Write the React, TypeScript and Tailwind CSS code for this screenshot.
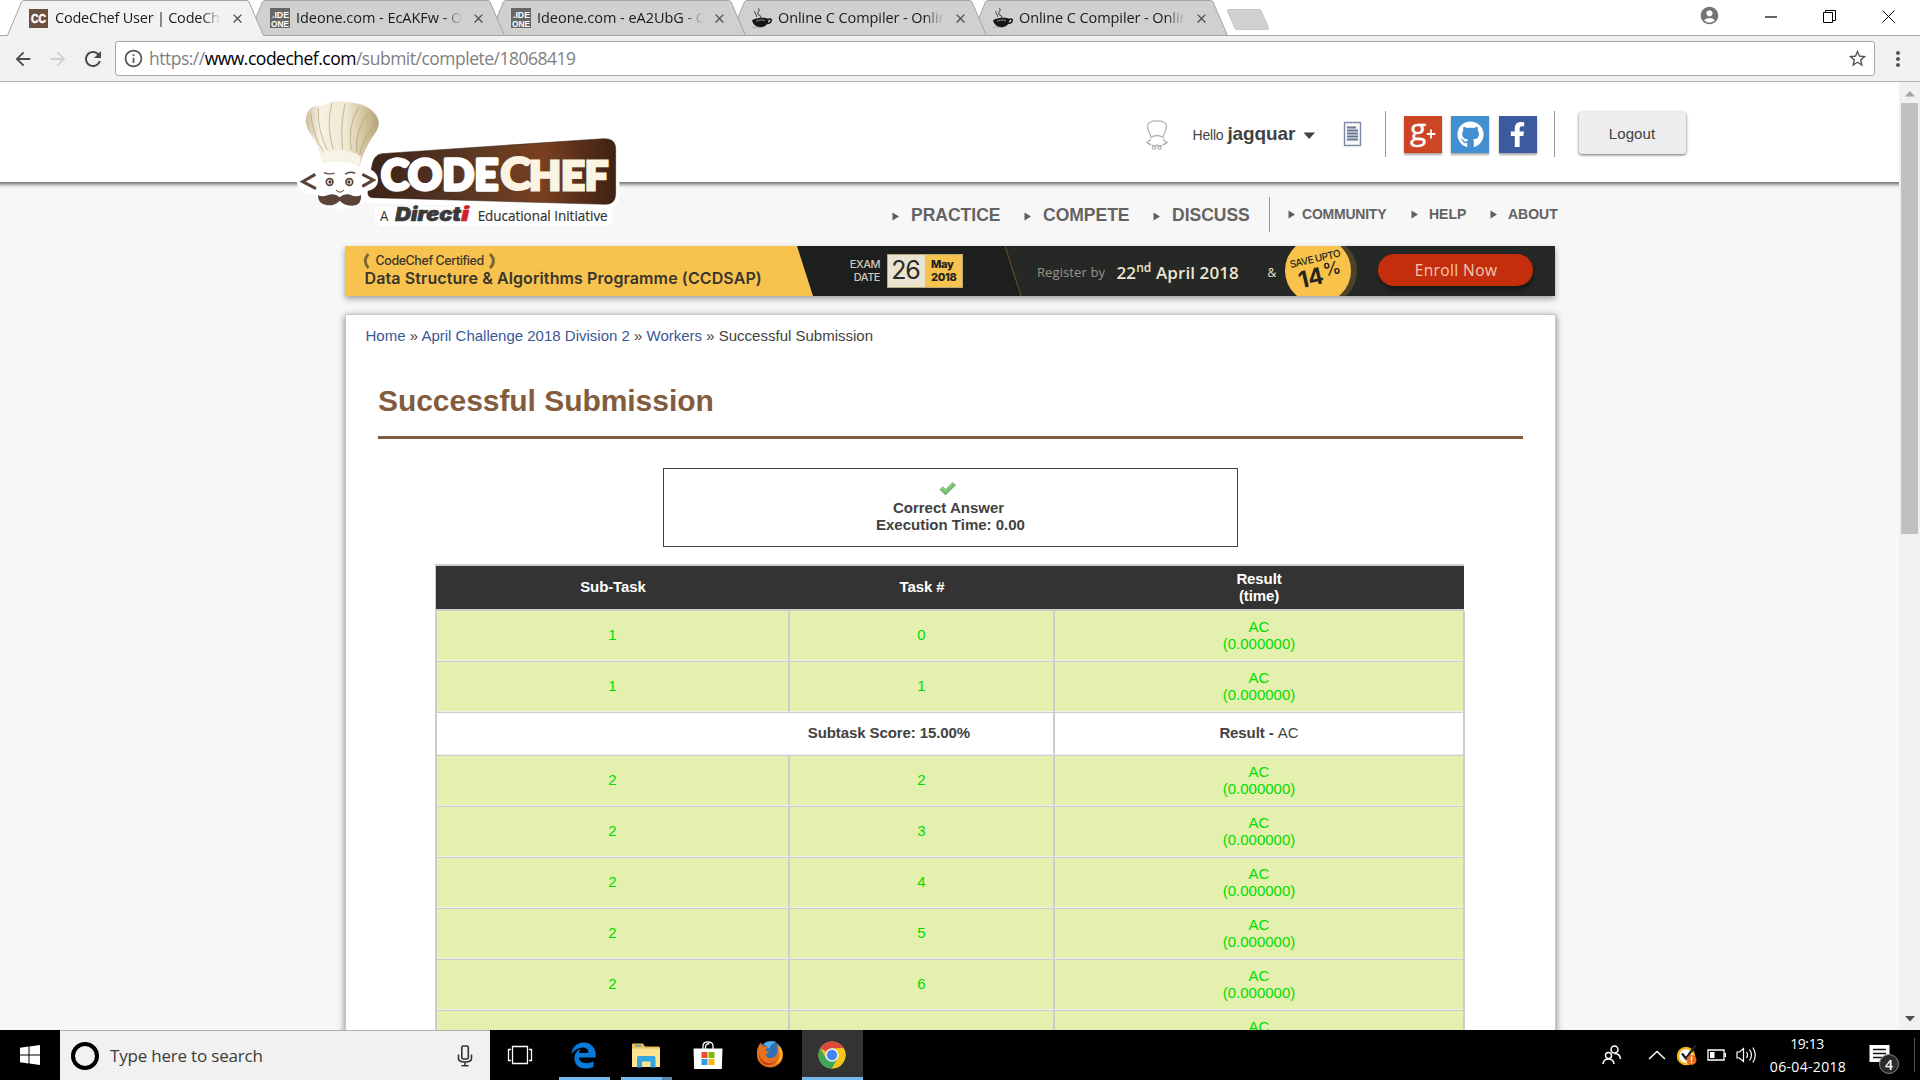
import React from "react";
import { FaEdgeLegacy, FaFacebookF, FaGithub } from "react-icons/fa";
import {
  MdAccountCircle,
  MdArrowBack,
  MdArrowForward,
  MdClose,
  MdInfoOutline,
  MdMoreVert,
  MdRefresh,
  MdStarBorder,
} from "react-icons/md";

function CodeChefFavicon() {
  return (
    <svg width="19" height="19" viewBox="0 0 19 19">
      <rect width="19" height="19" fill="#6b4f3f" />
      <text x="9.500" y="13.600" textAnchor="middle" fontFamily="Liberation Sans" fontWeight="700" fontSize="12" fill="#fff" stroke="#fff" strokeWidth="0.500" textLength="15" lengthAdjust="spacingAndGlyphs">CC</text>
    </svg>
  );
}

function IdeoneFavicon() {
  return (
    <svg width="20" height="20" viewBox="0 0 20 20">
      <rect width="20" height="20" fill="#666" />
      <text x="2" y="9.500" fontFamily="Liberation Sans" fontWeight="700" fontSize="9" fill="#fff" textLength="17" lengthAdjust="spacingAndGlyphs">.IDE</text>
      <text x="1" y="18.500" fontFamily="Liberation Sans" fontWeight="700" fontSize="9" fill="#fff" textLength="18" lengthAdjust="spacingAndGlyphs">ONE</text>
    </svg>
  );
}

function CupFavicon() {
  return (
    <svg width="20" height="20" viewBox="0 0 20 20" fill="none">
      <path d="M6 0.500c4 2-3 4 1 6.500s1 3 0 4M3 3c-2 2 3 3 1.500 6" stroke="#555" strokeWidth="1.100" />
      <path d="M0 12.500c3-3 13-3.500 16.500-1.500 0 4-2 7-6 8-6 1-9-2-10.500-6.500z" fill="#161616" />
      <path d="M16 11.500c5-2 4 4-1.500 4" stroke="#161616" strokeWidth="1.500" />
      <path d="M4 13.200c3-1.500 6-1.500 9-.8" stroke="#999" strokeWidth="1" />
      <path d="M0 19.300h8" stroke="#aaa" strokeWidth="1" />
    </svg>
  );
}

const tabs = [
  { title: "CodeChef User | CodeChe", icon: <CodeChefFavicon />, active: true, z: "z-50", spacing: "tracking-[-0.22px]" },
  { title: "Ideone.com - EcAKFw - O", icon: <IdeoneFavicon />, active: false, z: "z-40", spacing: "tracking-[-0.04px]" },
  { title: "Ideone.com - eA2UbG - O", icon: <IdeoneFavicon />, active: false, z: "z-30", spacing: "tracking-[-0.04px]" },
  { title: "Online C Compiler - Onlin", icon: <CupFavicon />, active: false, z: "z-20", spacing: "tracking-[-0.08px]" },
  { title: "Online C Compiler - Onlin", icon: <CupFavicon />, active: false, z: "z-10", spacing: "tracking-[-0.08px]" },
];

function Tab({ title, icon, active, z, spacing }: (typeof tabs)[number]) {
  return (
    <div className={`relative h-9 w-[241px] shrink-0 ${z}`}>
      <svg className="absolute top-0 left-0" width="258" height="36" viewBox="0 0 258 36">
        <path d="M0 36L0.500 35.500L14.500 2Q15.200 0.500 17 0.500H239.500Q241.300 0.500 242 2L256.500 35.500L257 36z" fill={active ? "#f2f2f2" : "#d0d0d0"} />
        <path
          d={active ? "M0.500 35.500L14.500 2Q15.200 0.500 17 0.500H239.500Q241.300 0.500 242 2L256.500 35.500" : "M0.500 35.500L14.500 2Q15.200 0.500 17 0.500H239.500Q241.300 0.500 242 2L256.500 35.500H0"}
          fill="none"
          stroke="#a3a3a3"
        />
      </svg>
      <div className="relative flex h-full items-center pl-[22px]">
        <div className="flex w-[26px]">{icon}</div>
        <div className={`w-[170px] text-[14.5px] whitespace-nowrap text-[#1a1a1a] [mask-image:linear-gradient(to_right,black_86%,transparent_98%)] ${spacing}`}>
          {title}
        </div>
        <MdClose className="ml-[4.5px] size-[15px] text-[#4f4f4f]" />
      </div>
    </div>
  );
}

function BrowserChrome() {
  return (
    <div className="shrink-0 font-['Open_Sans',sans-serif]">
      <div className="flex h-9 items-start bg-white pl-[7px] shadow-[inset_0_-1px_0_#a9a9a9]">
        {tabs.map((t, i) => (
          <Tab key={i} {...t} />
        ))}
        <svg className="mt-[9px] ml-[14px]" width="46" height="21" viewBox="0 0 46 21">
          <path d="M3 0.500H33Q34.500 0.500 35.200 2L42.500 18.500Q43 20.500 41 20.500H11.500Q9.500 20.500 8.800 19L1.500 2Q1 0.500 3 0.500z" fill="#d0d0d0" stroke="#c4c4c4" />
        </svg>
        <div className="ml-auto flex h-[33px] items-center pr-[25px] text-black">
          <MdAccountCircle className="mr-[45px] size-[21px] -translate-y-px text-[#757575]" />
          <svg className="mr-[46px]" width="12" height="12"><path d="M0 6H12" stroke="black" strokeWidth="1.200" /></svg>
          <svg className="mr-[46px]" width="13" height="13" fill="none" stroke="black"><path d="M0.500 2.500h9v10h-9zM2.500 2.500v-2h10v10h-3" /></svg>
          <svg width="13" height="13" fill="none" stroke="black"><path d="M0.500 0.500L12.500 12.500M12.500 0.500L0.500 12.500" /></svg>
        </div>
      </div>
      <div className="flex h-[46px] items-center border-b border-[#b3b3b3] bg-[#f1f1f1]">
        <MdArrowBack className="ml-[12px] size-[22px] text-[#4a4a4a]" />
        <MdArrowForward className="ml-[13px] size-[22px] text-[#cfcfcf]" />
        <MdRefresh className="ml-[12px] size-[24px] text-[#4a4a4a]" />
        <div className="ml-[10px] flex h-[35px] w-[1760px] items-center rounded-[3px] border border-[#a9a9a9] bg-white pr-[6px] pl-[7px]">
          <MdInfoOutline className="size-[21px] text-[#555]" />
          <div className="ml-[5px] text-[17.5px] leading-none tracking-[-0.5px] whitespace-nowrap text-[#7f7f7f]">
            https://<span className="text-black">www.codechef.com</span>/submit/complete/18068419
          </div>
          <MdStarBorder className="ml-auto size-[21px] text-[#555]" />
        </div>
        <MdMoreVert className="ml-[11px] size-[24px] text-[#555]" />
      </div>
    </div>
  );
}

function Logo() {
  return (
    <svg className="absolute top-0 left-[290px]" width="350" height="158" viewBox="0 6 1050 474">
      <defs>
        <linearGradient id="board" x1="0" x2="1">
          <stop offset="0" stopColor="#3d2318" />
          <stop offset="0.250" stopColor="#4d2e20" />
          <stop offset="0.450" stopColor="#5d3a24" />
          <stop offset="0.700" stopColor="#7a401f" />
          <stop offset="0.850" stopColor="#5a301b" />
          <stop offset="1" stopColor="#3e2214" />
        </linearGradient>
        <linearGradient id="hat" x1="0" x2="1">
          <stop offset="0" stopColor="#cdbf9a" />
          <stop offset="0.200" stopColor="#f6f2e4" />
          <stop offset="0.550" stopColor="#efe8d2" />
          <stop offset="0.750" stopColor="#d8cba8" />
          <stop offset="1" stopColor="#b5a47a" />
        </linearGradient>
      </defs>
      <path d="M70 250L20 300Q20 340 75 345Q90 390 150 386Q190 390 225 365L240 370L955 386Q987 380 988 340V210Q985 170 950 165L270 210Q230 220 225 245z" fill="#fff" />
      <path d="M255 380H965V425Q960 438 940 438H280Q255 436 255 415z" fill="#fff" />
      <path d="M275 221L940 176Q977 174 977 206V342Q976 374 945 373L248 353Q232 352 234 336L245 262Q250 224 275 221z" fill="url(#board)" stroke="#2e1a10" strokeWidth="1.500" />
      <path d="M95 245Q85 190 60 160Q38 125 52 98Q60 75 100 76Q130 58 170 66Q240 70 262 112Q274 135 255 160Q225 200 207 262Q150 235 95 250z" fill="url(#hat)" />
      <path d="M62 98Q68 165 100 215M85 84Q82 150 112 210M125 70Q108 140 130 208M165 72Q150 140 158 208M205 82Q172 140 184 210M235 98Q195 150 200 215M258 128Q215 180 208 230" fill="none" stroke="#a8926b" strokeWidth="3" opacity="0.600" />
      <path d="M92 225Q150 195 213 228L207 264Q150 232 98 252z" fill="#f7f3e6" />
      <ellipse cx="150" cy="305" rx="85" ry="60" fill="#fff" />
      <circle cx="232" cy="300" r="32" fill="#fff" />
      <path d="M76 283L38 305L78 326M217 283L250 300L217 319" fill="none" stroke="#5b4337" strokeWidth="9" />
      <path d="M102 278Q118 285 134 279M165 283Q180 272 196 280" fill="none" stroke="#5b4337" strokeWidth="4" />
      <circle cx="119" cy="306" r="10" fill="#fff" stroke="#5b4337" strokeWidth="5" />
      <circle cx="178" cy="306" r="10" fill="#fff" stroke="#5b4337" strokeWidth="5" />
      <circle cx="120" cy="306" r="5" fill="#5b4337" />
      <circle cx="177" cy="306" r="5" fill="#5b4337" />
      <path d="M138 330Q150 343 162 330" fill="none" stroke="#5b4337" strokeWidth="3" />
      <path d="M149 352Q165 337 188 347Q205 352 213 344Q217 374 188 377Q162 377 149 362Q136 377 112 376Q82 372 84 345Q96 352 112 346Q134 338 149 352z" fill="#5b4337" />
      <g fontFamily="Lato" fontWeight="900">
        <text x="273" y="331" fontSize="126" fill="#fff" stroke="#fff" strokeWidth="10" strokeLinejoin="round" textLength="352" lengthAdjust="spacingAndGlyphs">CODE</text>
        <text x="630" y="331" fontSize="138" fill="#faf4e0" stroke="#faf4e0" strokeWidth="6" textLength="94" lengthAdjust="spacingAndGlyphs">C</text>
        <text x="717" y="331" fontSize="120" fill="#faf4e0" stroke="#faf4e0" strokeWidth="9" textLength="238" lengthAdjust="spacingAndGlyphs">HEF</text>
      </g>
      <text x="270" y="424" fontFamily="Open Sans" fontSize="43" fill="#333" textLength="25" lengthAdjust="spacingAndGlyphs">A</text>
      <text x="316" y="424" fontFamily="Inter" fontWeight="900" fontStyle="italic" fontSize="57" fill="#3a3a3a" stroke="#3a3a3a" strokeWidth="2" textLength="197" lengthAdjust="spacingAndGlyphs">Direct</text>
      <text x="514" y="424" fontFamily="Inter" fontWeight="900" fontStyle="italic" fontSize="57" fill="#cf2127" stroke="#cf2127" strokeWidth="2" textLength="23" lengthAdjust="spacingAndGlyphs">i</text>
      <text x="563" y="424" fontFamily="Open Sans" fontSize="42" fill="#333" stroke="#333" strokeWidth="0.600" textLength="390" lengthAdjust="spacingAndGlyphs">Educational Initiative</text>
    </svg>
  );
}

function Header() {
  return (
    <header className="relative z-10 flex h-[100px] bg-white shadow-[0_1px_0_#858585,0_2px_0_#979797,0_3px_0_#b5b5b5,0_4px_0_#d0d0d0,0_5px_0_#e6e6e6,0_6px_0_#f0f0f0]">
      <Logo />
      <div className="ml-[1146px] flex h-[72px] items-center pt-[32px] pb-px whitespace-nowrap">
        <svg className="mt-[2px]" width="22" height="30" viewBox="0 0 22 30" fill="none" stroke="#b5b5b5" strokeWidth="1.300">
          <path d="M5 17.500C4.500 13 1.200 10 1.500 6C2 1.500 8 .8 11 .8S20 1.500 20.500 6C20.800 10 17.500 13 17 17.500Q11 13.500 5 17.500z" />
          <path d="M5 19.500L1 22.500L5 25M17 19.500L21 22.500L17 25M6 25Q8.500 27 11 25Q13.500 27 16 25" strokeWidth="1.500" />
          <circle cx="8" cy="27.500" r="1.700" /><circle cx="13.500" cy="27.500" r="1.700" />
        </svg>
        <div className="mt-[2px] ml-[24.5px] flex w-[103px] items-baseline text-[#424242]">
          <span className="text-[14px] tracking-[-0.2px]">Hello</span>
          <span className="ml-[4px] text-[19px] font-bold tracking-[-0.1px]">jagquar</span>
        </div>
        <svg className="mt-[5px] ml-[7px]" width="13" height="8"><path d="M0.500 0.500H12L6.200 7z" fill="#424242" /></svg>
        <svg className="ml-[27px]" width="19" height="26" fill="none">
          <path d="M1.500 1.500h16v23h-16z" stroke="#7d8ba4" strokeWidth="1.400" fill="#f6f8fb" />
          <path d="M4 6.500h9M4 9.500h11M4 12.500h11M4 15.500h11M4 18.500h11" stroke="#67758f" strokeWidth="1.800" />
        </svg>
      </div>
      <div className="mt-[29px] ml-[23px] flex">
        <div className="h-[46px] w-px bg-[#999]" />
        <div className="mt-[5px] ml-[18px] flex gap-[9.5px] text-white">
          <div className="flex h-[37px] w-[38px] items-center justify-center bg-[#cd4524] shadow-[0_2px_2px_rgba(0,0,0,0.35)]">
            <svg width="32" height="32">
              <text x="3" y="20.500" fontFamily="Open Sans" fontSize="30" fill="#fff" stroke="#fff" strokeWidth="0.300">g</text>
              <path d="M24 10.500v9M19.800 15h8.600" stroke="#fff" strokeWidth="1.800" />
            </svg>
          </div>
          <div className="flex h-[37px] w-[38px] items-center justify-center bg-[#4290d1] shadow-[0_2px_2px_rgba(0,0,0,0.35)]">
            <FaGithub className="size-[27px]" />
          </div>
          <div className="flex h-[37px] w-[38px] items-center justify-center bg-[#3c5a9e] shadow-[0_2px_2px_rgba(0,0,0,0.35)]">
            <FaFacebookF className="size-[25px]" />
          </div>
        </div>
        <div className="ml-[17px] h-[46px] w-px bg-[#999]" />
        <button className="mt-px ml-[24px] h-[42px] w-[107px] rounded-[3px] bg-[#ededed] pt-[3px] text-[15px] tracking-[0.1px] text-[#424242] shadow-[0_1px_3px_rgba(0,0,0,0.6)]">
          Logout
        </button>
      </div>
    </header>
  );
}

function Arrow() {
  return (
    <svg width="8" height="9" className="shrink-0"><path d="M0.500 0.500L7 4.500L0.500 8.500z" fill="#5e5e5e" /></svg>
  );
}

function MainNav() {
  const main = [
    ["PRACTICE", "w-[132px]"],
    ["COMPETE", "w-[129px]"],
    ["DISCUSS", "w-[116px]"],
  ];
  const side = [
    ["COMMUNITY", "w-[123px]", "ml-[6px] tracking-[-0.23px]"],
    ["HELP", "w-[79px]", "ml-[10px]"],
    ["ABOUT", "w-[66px]", "ml-[10px]"],
  ];
  return (
    <nav className="flex h-[64px] items-start pt-[15px] pl-[892px] font-bold text-[#636363]">
      {main.map(([label, w]) => (
        <div key={label} className={`flex h-[36px] items-center ${w}`}>
          <div className="pt-[2px]"><Arrow /></div>
          <span className="ml-[11px] text-[17.5px]">{label}</span>
        </div>
      ))}
      <div className="h-[35px] w-px bg-[#999]" />
      <div className="ml-[18px] flex">
        {side.map(([label, w, ml]) => (
          <div key={label} className={`flex h-[35px] items-center ${w}`}>
            <Arrow />
            <span className={`text-[14px] ${ml}`}>{label}</span>
          </div>
        ))}
      </div>
    </nav>
  );
}

function Banner() {
  return (
    <div className="relative ml-[345px] flex h-[50px] w-[1210px] overflow-hidden bg-[#f7c24e] font-['Inter',sans-serif] whitespace-nowrap">
      <svg className="absolute top-0 left-[452px]" width="758" height="50">
        <path d="M0 0H758V50H16z" fill="#1c1f1e" />
        <path d="M208 0H758V50H224z" fill="#262826" />
        <path d="M208 0L224 50" stroke="#6b5527" />
        <circle cx="526" cy="25" r="34" fill="#4d422a" />
        <circle cx="521" cy="24.500" r="33" fill="#f9c24b" />
      </svg>
      <div className="relative w-[490px] pl-[18px] text-[#38352c]">
        <div className="mt-[6.5px] flex h-[17px] items-center text-[12.5px] font-medium tracking-[-0.42px]">
          <svg width="7" height="16" fill="none" stroke="#7c6731" strokeWidth="2.800"><path d="M5.500 1Q-1 8 5.500 15" /></svg>
          <span className="mx-[5.5px] pt-px">CodeChef Certified</span>
          <svg width="7" height="16" fill="none" stroke="#7c6731" strokeWidth="2.800"><path d="M1 1Q8 8 1 15" /></svg>
        </div>
        <div className="-mt-px ml-[1.5px] text-[16px] leading-[18px] font-semibold tracking-[0.1px]">Data Structure &amp; Algorithms Programme (CCDSAP)</div>
      </div>
      <div className="relative mt-[11.5px] w-[45px] text-right text-[11px] leading-[13px] font-medium tracking-[-0.5px] text-[#cfcab9]">
        EXAM<br />DATE
      </div>
      <div className="relative mt-[8px] ml-[7px] flex h-[34px] w-[76px] border border-[#b9ab7c]">
        <div className="w-[37px] bg-[#e9e3cf] pr-[2px] text-center text-[25px] leading-[30px] tracking-[-1px] text-[#2b2b29]">26</div>
        <div className="flex-1 bg-[#f7c24e] pt-[3px] pl-[6px] text-[11px] leading-[13px] font-extrabold tracking-[-0.35px] text-[#222]">
          May<br />2018
        </div>
      </div>
      <div className="relative ml-[74px] flex h-[53px] items-center font-['Open_Sans',sans-serif] text-[#ece5d0]">
        <span className="w-[79.5px] text-[13px] tracking-[0.1px] text-[#96938a]">Register by</span>
        <span className="w-[151px] text-[17px] font-semibold tracking-[0.1px]">22<span className="relative -top-[7px] text-[12px]">nd</span> April 2018</span>
        <span className="text-[12px]">&amp;</span>
      </div>
      <svg className="absolute top-0 left-[930px]" width="90" height="50" fontFamily="Inter" fill="#25261f">
        <g transform="rotate(-13 43 25)">
          <text x="43" y="16" fontSize="10" fontWeight="500" textAnchor="middle" textLength="52">SAVE UPTO</text>
          <text x="22" y="38" fontSize="23" fontWeight="700" textLength="25">14</text>
          <text x="48" y="32" fontSize="18" fontWeight="500">%</text>
        </g>
      </svg>
      <div className="absolute top-[8px] right-[22.5px] flex h-[32px] w-[155px] items-center justify-center rounded-full bg-[#c42e0d] pt-px pl-[2px] font-['Open_Sans',sans-serif] text-[15.5px] tracking-[0.4px] text-[#f3c9b4] shadow-[1px_4px_5px_rgba(0,0,0,0.4)]">
        Enroll Now
      </div>
    </div>
  );
}

function Check() {
  return (
    <svg width="18" height="14" viewBox="0 0 18 14">
      <path d="M1 7.500L4 4.800L6.500 7.500L13.500 0.800L16.500 3L6.500 13z" fill="#78bf6f" stroke="#5ba353" strokeWidth="0.800" strokeLinejoin="round" />
      <path d="M2 7.200L4 5.700L6.500 8.500L13.500 1.800" stroke="#a3d89c" fill="none" />
    </svg>
  );
}

type Row = { sub: number; task: number } | { score: string };
const rows: Row[] = [
  { sub: 1, task: 0 },
  { sub: 1, task: 1 },
  { score: "15.00%" },
  { sub: 2, task: 2 },
  { sub: 2, task: 3 },
  { sub: 2, task: 4 },
  { sub: 2, task: 5 },
  { sub: 2, task: 6 },
  { sub: 2, task: 7 },
];

function ResultTable() {
  return (
    <div className="mt-[17px] ml-[89px] w-[1030px] text-[15px] leading-[17px]">
      <div className="grid h-[47px] w-[1029px] grid-cols-[354px_264px_410px] items-center border-t-2 border-b-2 border-l border-[#ccc] bg-[#333] pb-[2px] text-center font-bold tracking-[-0.1px] text-white">
        <div>Sub-Task</div>
        <div>Task #</div>
        <div>Result<br />(time)</div>
      </div>
      <div className="border-x-2 border-[#ccc]">
        {rows.map((r, i) =>
          "score" in r ? (
            <div key={i} className="flex h-[43px] border-b border-[#ccc] text-[#424242]">
              <div className="flex w-[618px] items-center justify-end border-r-2 border-b border-r-[#ccc] border-b-[#eee] pr-[83px] pb-[2px] font-bold tracking-[-0.1px]">
                Subtask Score: {r.score}
              </div>
              <div className="flex flex-1 items-center justify-center border-b border-[#eee] pb-[2px]">
                <b className="tracking-[-0.1px]">Result -</b>&nbsp;AC
              </div>
            </div>
          ) : (
            <div key={i} className="flex h-[51px] border-b border-[#ccc] bg-[#e4f0ae] text-center text-[#0d0]">
              <div className="flex w-[353px] items-center justify-center border-r-2 border-b border-r-[#ccc] border-b-[#eee] pb-[2px]">{r.sub}</div>
              <div className="flex w-[265px] items-center justify-center border-r-2 border-b border-r-[#ccc] border-b-[#eee] pb-[2px]">{r.task}</div>
              <div className="flex flex-1 items-center justify-center border-b border-[#eee] pb-[2px]">
                <div>AC<br />(0.000000)</div>
              </div>
            </div>
          ),
        )}
      </div>
    </div>
  );
}

function Content() {
  return (
    <main className="ml-[345px] h-[730px] w-[1211px] border border-[#c8c8c8] bg-white shadow-[0_2px_7px_rgba(0,0,0,0.5)]">
      <div className="mt-[12px] ml-[19.5px] text-[15px] leading-[18px] text-[#424242]">
        <span className="text-[#3a5795]">Home</span> » <span className="text-[#3a5795]">April Challenge 2018 Division 2</span> »{" "}
        <span className="text-[#3a5795]">Workers</span> » Successful Submission
      </div>
      <h1 className="mt-[39px] ml-[32px] h-[55px] w-[1145px] border-b-3 border-[#825c3e] text-[30px] leading-[34px] font-bold tracking-[-0.05px] text-[#825c3e]">
        Successful Submission
      </h1>
      <div className="mt-[29px] ml-[317px] flex h-[79px] w-[575px] flex-col items-center border border-[#424242] pt-[13px] text-[15px] leading-[17px] font-bold text-[#424242]">
        <div className="mr-[5px] mb-[3px] h-[14px]"><Check /></div>
        <div className="mr-[4px]">Correct Answer</div>
        <div>Execution Time: 0.00</div>
      </div>
      <ResultTable />
    </main>
  );
}

function ChromeIcon() {
  return (
    <svg width="28" height="28" viewBox="0 0 28 28">
      <circle cx="14" cy="14" r="13.500" fill="#f4c61c" />
      <path d="M14 14L2.300 7.250A13.500 13.500 0 0 1 25.700 7.250H14z" fill="#dd4b3e" />
      <path d="M2.300 7.250A13.500 13.500 0 0 0 14 27.500L19.800 17.400L14 14L8.200 17.400z" fill="#3fa65a" />
      <path d="M25.700 7.250A13.500 13.500 0 0 1 14 27.500L20 17V7.250z" fill="#f4c61c" />
      <circle cx="14" cy="14" r="6.700" fill="#f3f3f3" />
      <circle cx="14" cy="14" r="5.200" fill="#4286f5" />
    </svg>
  );
}

function FirefoxIcon() {
  return (
    <svg width="28" height="28" viewBox="0 0 28 28">
      <circle cx="14.500" cy="12.500" r="11.500" fill="#2f6fb5" />
      <path d="M8 4Q13 0 20 2Q13 5 14 9z" fill="#56b0e8" />
      <path d="M3 5Q4 3 5 2.500Q5 5 7.500 6.500Q10 6 12 7Q10 9 9.500 10.500L13 12Q12 14 9.500 14.500Q11 19 16 18Q20 17 21 13Q22 9 20 5Q27 8 27 15A13 12.500 0 0 1 1 15Q0.500 9 3 5z" fill="#e6701c" />
      <path d="M22 5Q27 9 26.500 15Q26 22 19 25Q24 20 23.500 14Q23.500 9 22 5z" fill="#f9b52a" />
      <path d="M2.500 12Q4 21 12 23Q18 24 21 19Q17 27 9 24.500Q3 22 2.500 12z" fill="#c8401a" />
    </svg>
  );
}

function Taskbar() {
  return (
    <div className="flex h-[50px] shrink-0 bg-black font-['Open_Sans',sans-serif] text-white">
      <div className="flex w-[60px] items-center justify-center">
        <svg width="20" height="20" viewBox="0 0 20 20" fill="#fff">
          <path d="M0 2.800L8.500 1.600V9.500H0zM9.500 1.500L20 0V9.500H9.500zM0 10.500H8.500V18.400L0 17.200zM9.500 10.500H20V20L9.500 18.500z" />
        </svg>
      </div>
      <div className="flex w-[430px] items-center border-t border-[#b0b0b0] bg-[#f1f1f1] pl-[11px] text-[#3b3b3b]">
        <div className="size-[28px] rounded-full border-4 border-black" />
        <div className="ml-[11px] text-[17px] tracking-[-0.2px]">Type here to search</div>
        <svg className="mr-[17px] ml-auto" width="16" height="22" fill="none" stroke="#333" strokeWidth="1.600">
          <rect x="4.800" y="1" width="6.500" height="13" rx="1.500" />
          <path d="M1.500 9.500v4q0 3.500 6.500 3.500t6.500-3.500v-4M8 17v4M4.500 20.800h7" />
        </svg>
      </div>
      <div className="flex w-[61px] items-center justify-center pr-[2px]">
        <svg width="26" height="20" fill="none" stroke="#fff" strokeWidth="1.300"><path d="M5.500 1.500h15v17h-15zM4 4.500H1.500v11H4M22 4.500h2.500v11H22" /></svg>
      </div>
      <div className="relative ml-[8px] flex w-[51px] items-center justify-center">
        <FaEdgeLegacy className="mr-[2px] size-[27px] text-[#0a7bda]" />
        <div className="absolute bottom-0 h-[3px] w-full bg-[#76b9ed]" />
      </div>
      <div className="relative ml-[11px] flex w-[51px] items-center justify-center">
        <svg className="mr-[2px]" width="28" height="25" viewBox="0 0 28 25">
          <path d="M0 1.500Q0 .5 1 .5H11L13 3.500H26.500Q28 3.500 28 5V24H0z" fill="#e8bf57" />
          <path d="M3 2h6v1.500H3z" fill="#5b9bd0" />
          <path d="M0 5.500H28V24H0z" fill="#fce493" />
          <path d="M5 24.500V14.500Q5 13 6.500 13H22Q23.500 13 23.500 14.500V24.500H18.500V18.500H10V24.500z" fill="#33a5e0" />
        </svg>
        <div className="absolute bottom-0 flex h-[3px] w-full bg-[#76b9ed]">
          <div className="ml-auto w-[10px] bg-[#5586ad]" />
        </div>
      </div>
      <div className="ml-[20px] flex w-[31px] items-center justify-center">
        <svg width="30" height="28" viewBox="0 0 30 28">
          <path d="M10 8V5Q10 .8 15 .8T20 5V8M12.500 8V6Q12.500 2.500 16.500 2.500" fill="none" stroke="#fff" strokeWidth="1.300" />
          <path d="M0.500 7.500H29.500L28.800 28H1.200z" fill="#fff" />
          <path d="M8.500 11h6v6h-6z" fill="#e8502a" /><path d="M15.500 11h6v6h-6z" fill="#7fba00" />
          <path d="M8.500 18h6v6h-6z" fill="#2a9fe5" /><path d="M15.500 18h6v6h-6z" fill="#f9b40a" />
        </svg>
      </div>
      <div className="ml-[33px] flex w-[28px] items-center pb-[2px]"><FirefoxIcon /></div>
      <div className="ml-[18px] flex w-[61px] items-center justify-center border-b-3 border-[#76b9ed] bg-[#333] pt-[2px] pr-[2px]"><ChromeIcon /></div>
      <div className="ml-auto flex items-center">
        <svg width="20" height="20" fill="none" stroke="#fff" strokeWidth="1.500">
          <circle cx="12.500" cy="4.500" r="3.500" /><path d="M18.500 14Q18 8.500 12.500 8.500" />
          <circle cx="6.500" cy="10.500" r="3" /><path d="M1 19Q1.500 14 6.500 14T12 19" />
        </svg>
        <svg className="ml-[26px]" width="18" height="10" fill="none" stroke="#fff" strokeWidth="1.500"><path d="M1 9L9 1.500L17 9" /></svg>
        <svg className="ml-[10px]" width="22" height="22" fill="none">
          <circle cx="10" cy="12" r="8" fill="#fff" stroke="#f6b817" strokeWidth="2.500" />
          <path d="M6 9.500L10 14.500L19.500 1.500" stroke="#222" strokeWidth="2.400" />
          <circle cx="15.500" cy="16" r="5" fill="#ef6a1d" /><path d="M15.500 12.500v4M15.500 17.700v1.500" stroke="#fff" strokeWidth="1.500" />
        </svg>
        <svg className="ml-[9px]" width="20" height="12" fill="none"><path d="M1 1h16v10H1z" stroke="#fff" strokeWidth="1.300" /><path d="M3 3h4.500v6H3zM17.500 4H19v4h-1.500z" fill="#fff" /></svg>
        <svg className="ml-[9px]" width="22" height="18" fill="none" stroke="#fff" strokeWidth="1.200"><path d="M1 6h2.500L7.500 2.500v13L3.500 12H1zM10.500 6q2 3 0 6M13.500 3.500q4 5.500 0 11M16.800 1.500q5 7.500 0 15" /></svg>
        <div className="ml-[10px] w-[80px] text-center text-[14px] leading-[23px]">
          <div className="pr-[2px] tracking-[-0.4px]">19:13</div>
          <div className="tracking-[0.33px]">06-04-2018</div>
        </div>
        <div className="relative ml-[21px] h-[34px] w-[46px] border-r border-[#555]">
          <svg className="mt-[7px]" width="21" height="20"><path d="M0.500 0H20.500V17H17V20L13.500 17H0.500z" fill="#fff" /><path d="M4 4.500h13M4 8.500h13M4 12.500h9" stroke="#111" strokeWidth="1.400" /></svg>
          <div className="absolute top-[16px] left-[10px] flex size-[20px] items-center justify-center rounded-full border border-[#888] bg-[#2b2b2b] text-[14px] font-semibold">4</div>
        </div>
        <div className="w-[5px]" />
      </div>
    </div>
  );
}

export default function App() {
  return (
    <div className="flex h-[1080px] w-[1920px] flex-col overflow-hidden bg-white font-['Liberation_Sans',Arial,sans-serif]">
      <BrowserChrome />
      <div className="flex h-[948px]">
        <div className="w-[1899px] overflow-hidden bg-[#f7f7f7]">
          <Header />
          <MainNav />
          <div className="ml-[345px] w-[1210px] shadow-[0_3px_6px_rgba(0,0,0,0.35)]">
            <div className="-ml-[345px]"><Banner /></div>
          </div>
          <div className="h-[18px]" />
          <Content />
        </div>
        <div className="flex w-[21px] flex-col items-center bg-[#f1f1f1]">
          <svg className="mt-[9px]" width="10" height="6"><path d="M0 5.500H10L5 0z" fill="#a3a3a3" /></svg>
          <div className="mt-[6px] h-[431px] w-[17px] bg-[#c1c1c1]" />
          <svg className="mt-auto mb-[8px]" width="10" height="6"><path d="M0 0H10L5 5.500z" fill="#505050" /></svg>
        </div>
      </div>
      <Taskbar />
    </div>
  );
}
